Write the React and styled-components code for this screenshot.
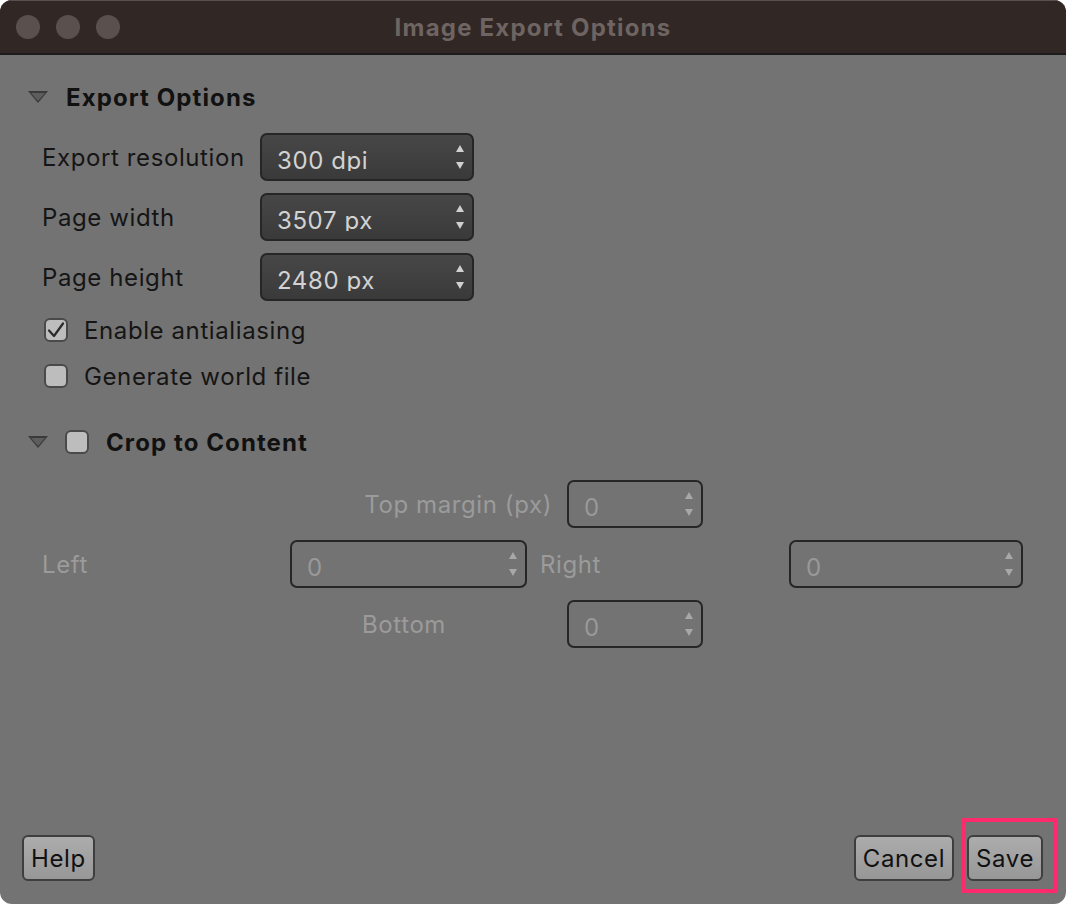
import styled, { createGlobalStyle } from 'styled-components'

const GlobalStyle = createGlobalStyle`
  html, body {
    margin: 0;
    padding: 0;
    background: #ffffff;
  }
  body {
    font-family: Inter, "Liberation Sans", sans-serif;
    letter-spacing: 0.6px;
  }
`

const Window = styled.div`
  width: 1066px;
  height: 904px;
  border-radius: 12px;
  overflow: hidden;
  background: #737373;
  display: flex;
  flex-direction: column;
  position: relative;
`

const TitleBar = styled.div`
  height: 55px;
  flex: 0 0 55px;
  background: #312725;
  border-top: 1px solid #5a504e;
  border-bottom: 2px solid #1c1c1c;
  box-sizing: border-box;
  display: flex;
  align-items: center;
  padding-left: 16px;
  position: relative;
`

const Light = styled.span`
  width: 24px;
  height: 24px;
  border-radius: 50%;
  background: #5a504e;
  margin-right: 16px;
`

const Title = styled.div`
  position: absolute;
  left: 0;
  right: 0;
  text-align: center;
  font-size: 24px;
  font-weight: 700;
  letter-spacing: 1.2px;
  color: #6e6462;
`

const Body = styled.div`
  flex: 1;
  display: flex;
  flex-direction: column;
  padding: 24px 0 0 28px;
`

const GroupHeader = styled.div`
  display: flex;
  align-items: center;
  height: 36px;
  gap: ${(p) => p.gap || 18}px;
  font-size: 24px;
  font-weight: 700;
  letter-spacing: 1.1px;
  color: #111;
`

const Arrow = styled.span`
  width: 0;
  height: 0;
  border-left: 10px solid transparent;
  border-right: 10px solid transparent;
  border-top: 12px solid #3a3a3a;
  position: relative;
  &::after {
    content: '';
    position: absolute;
    left: -7px;
    top: -10px;
    border-left: 7px solid transparent;
    border-right: 7px solid transparent;
    border-top: 8px solid #5d5d5d;
  }
`

const FormGrid = styled.div`
  display: grid;
  grid-template-columns: 218px 214px;
  row-gap: 12px;
  margin: 18px 0 0 14px;
  align-items: center;
`

const Label = styled.div`
  font-size: 24px;
  color: ${(p) => (p.disabled ? '#9b9b9b' : '#151515')};
  text-align: ${(p) => (p.right ? 'right' : 'left')};
  white-space: nowrap;
`

const Spin = styled.div`
  height: 48px;
  box-sizing: border-box;
  border: 2px solid #262626;
  border-radius: 7px;
  background: ${(p) =>
    p.disabled ? '#737373' : 'linear-gradient(#474747, #3a3a3a)'};
  display: flex;
  align-items: center;
  justify-content: space-between;
  padding: 0 8px 0 15px;
`

/* the value line is clipped just under its baseline, as in the dialog */
const SpinValue = styled.span`
  font-size: 24px;
  color: ${(p) => (p.disabled ? '#999999' : '#d2d2d2')};
  height: 25px;
  line-height: 30px;
  overflow: hidden;
  margin-top: 2px;
`

const Steppers = styled.span`
  display: flex;
  flex-direction: column;
  gap: 10px;
  align-items: center;
`

const Tri = styled.span`
  width: 0;
  height: 0;
  border-left: 4px solid transparent;
  border-right: 4px solid transparent;
  ${(p) => (p.down ? 'border-top' : 'border-bottom')}: 7px solid
    ${(p) => (p.disabled ? '#a8a8a8' : '#d0d0d0')};
`

const Checks = styled.div`
  display: flex;
  flex-direction: column;
  gap: 20px;
  margin: 16px 0 0 16px;
`

const CheckRow = styled.label`
  display: flex;
  align-items: center;
  gap: 16px;
  font-size: 24px;
  color: #151515;
  height: 26px;
`

const Box = styled.span`
  width: 24px;
  height: 24px;
  box-sizing: border-box;
  border: 2px solid #4a4a4a;
  border-radius: 6px;
  background: #bdbdbd;
  display: flex;
  align-items: center;
  justify-content: center;
`

const CropHeader = styled(GroupHeader)`
  margin-top: 35px;
`

const Margins = styled.div`
  display: flex;
  flex-direction: column;
  gap: 12px;
  margin: 20px 0 0 14px;
`

const CenterRow = styled.div`
  display: grid;
  grid-template-columns: 190px 136px;
  column-gap: 15px;
  align-items: center;
  margin-left: 320px;
`

const SideRow = styled.div`
  display: grid;
  grid-template-columns: 248px 237px 262px 234px;
  align-items: center;
`

const SideLabel = styled(Label)`
  padding-left: ${(p) => p.pad || 0}px;
`

const Footer = styled.div`
  margin-top: auto;
  display: flex;
  align-items: center;
  justify-content: space-between;
  padding: 0 23px 23px 22px;
`

const Group = styled.div`
  display: flex;
  gap: 13px;
  align-items: center;
`

const Button = styled.button`
  height: 46px;
  box-sizing: border-box;
  padding: 0 7px;
  border: 2px solid #3e3e3e;
  border-radius: 6px;
  background: linear-gradient(#acacac, #979797);
  font-family: Inter, "Liberation Sans", sans-serif;
  font-size: 24px;
  letter-spacing: 0.6px;
  color: #111;
  position: relative;
`

const Highlight = styled.span`
  position: absolute;
  left: -8px;
  top: -19px;
  right: -17px;
  bottom: -14px;
  border: 4px solid #ff2a6d;
  border-radius: 2px;
  pointer-events: none;
`

const SpinBox = ({ value, disabled }) => (
  <Spin disabled={disabled}>
    <SpinValue disabled={disabled}>{value}</SpinValue>
    <Steppers>
      <Tri disabled={disabled} />
      <Tri down disabled={disabled} />
    </Steppers>
  </Spin>
)

const Check = () => (
  <svg width="18" height="16" viewBox="0 0 18 16">
    <path d="M2 8.5 L7 14 L16 1.5" fill="none" stroke="#2a2a2a" strokeWidth="2.2" strokeLinecap="round" strokeLinejoin="round" />
  </svg>
)

const App = () => (
  <>
    <GlobalStyle />
    <Window>
      <TitleBar>
        <Light />
        <Light />
        <Light />
        <Title>Image Export Options</Title>
      </TitleBar>
      <Body>
        <GroupHeader>
          <Arrow />
          Export Options
        </GroupHeader>
        <FormGrid>
          <Label>Export resolution</Label>
          <SpinBox value="300 dpi" />
          <Label>Page width</Label>
          <SpinBox value="3507 px" />
          <Label>Page height</Label>
          <SpinBox value="2480 px" />
        </FormGrid>
        <Checks>
          <CheckRow>
            <Box>
              <Check />
            </Box>
            Enable antialiasing
          </CheckRow>
          <CheckRow>
            <Box />
            Generate world file
          </CheckRow>
        </Checks>
        <CropHeader gap={17}>
          <Arrow />
          <Box />
          Crop to Content
        </CropHeader>
        <Margins>
          <CenterRow>
            <Label disabled right>
              Top margin (px)
            </Label>
            <SpinBox value="0" disabled />
          </CenterRow>
          <SideRow>
            <Label disabled>Left</Label>
            <SpinBox value="0" disabled />
            <SideLabel disabled pad={13}>
              Right
            </SideLabel>
            <SpinBox value="0" disabled />
          </SideRow>
          <CenterRow>
            <Label disabled>Bottom</Label>
            <SpinBox value="0" disabled />
          </CenterRow>
        </Margins>
      </Body>
      <Footer>
        <Button>Help</Button>
        <Group>
          <Button>Cancel</Button>
          <Button>
            Save
            <Highlight />
          </Button>
        </Group>
      </Footer>
    </Window>
  </>
)

export default App
